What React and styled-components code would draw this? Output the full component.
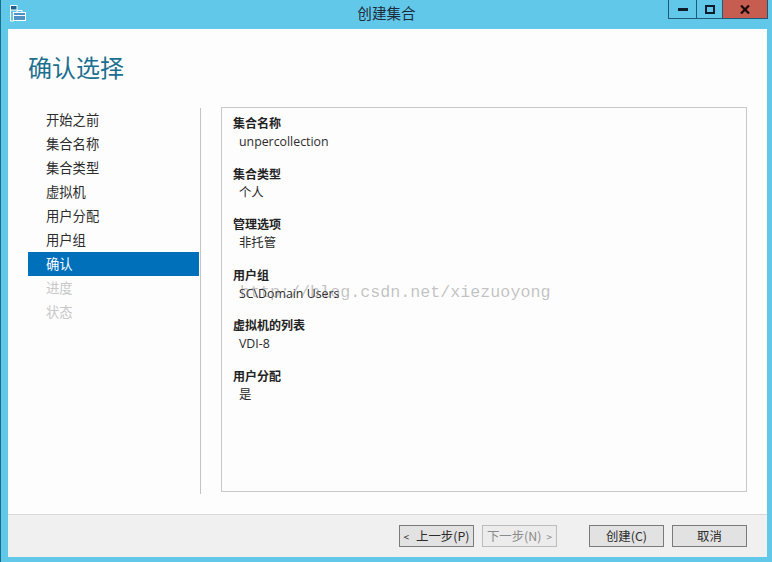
import styled, { createGlobalStyle } from "styled-components";

const steps = [
    { name: "开始之前" },
    { name: "集合名称" },
    { name: "集合类型" },
    { name: "虚拟机" },
    { name: "用户分配" },
    { name: "用户组" },
    { name: "确认", active: true },
    { name: "进度", disabled: true },
    { name: "状态", disabled: true },
];

const fields = [
    { label: "集合名称", value: "unpercollection" },
    { label: "集合类型", value: "个人" },
    { label: "管理选项", value: "非托管" },
    { label: "用户组", value: "SC\\Domain Users" },
    { label: "虚拟机的列表", value: "VDI-8" },
    { label: "用户分配", value: "是" },
];

const App = () => {
    return (
        <>
            <GlobalStyle />
            <Window>
                <TitleBar>
                    <AppIcon width="17" height="17" viewBox="0 0 17 17">
                        <path d="M0.5 0.5h6.5v4.5h-6.5z" fill="#1f5f8f" stroke="#fff" strokeWidth="1" />
                        <path d="M0.5 5v11h3" fill="none" stroke="#fff" strokeWidth="1" />
                        <rect x="3.5" y="7.5" width="12" height="8" fill="#4f93c4" stroke="#fff" strokeWidth="1" />
                        <path d="M7 7.5v-2h5v2M3.5 10.5h12" fill="none" stroke="#fff" strokeWidth="1" />
                    </AppIcon>
                    <WindowTitle>创建集合</WindowTitle>
                    <Controls>
                        <ControlButton $width={28}>
                            <svg width="10" height="3" viewBox="0 0 10 3">
                                <rect width="10" height="3" fill="#0c1c2c" />
                            </svg>
                        </ControlButton>
                        <ControlButton $width={26}>
                            <svg width="10" height="9" viewBox="0 0 10 9">
                                <rect x="1" y="1" width="8" height="7" fill="none" stroke="#0c1c2c" strokeWidth="2" />
                            </svg>
                        </ControlButton>
                        <CloseButton>
                            <svg width="10" height="9" viewBox="0 0 10 9">
                                <path d="M1 0.5l8 8M9 0.5l-8 8" fill="none" stroke="#1a0c0a" strokeWidth="2.2" />
                            </svg>
                        </CloseButton>
                    </Controls>
                </TitleBar>
                <Client>
                    <PageTitle>确认选择</PageTitle>
                    <Main>
                        <Sidebar>
                            {steps.map((step) => (
                                <Step key={step.name} $active={step.active} $disabled={step.disabled}>
                                    {step.name}
                                </Step>
                            ))}
                        </Sidebar>
                        <Panel>
                            {fields.map((field) => (
                                <Field key={field.label}>
                                    <Label>{field.label}</Label>
                                    <Value>{field.value}</Value>
                                </Field>
                            ))}
                        </Panel>
                    </Main>
                    <Footer>
                        <ButtonGroup>
                            <Button>
                                <Chevron $side="left">&lt;</Chevron>上一步(P)
                            </Button>
                            <Button $disabled>
                                下一步(N)<Chevron $side="right">&gt;</Chevron>
                            </Button>
                        </ButtonGroup>
                        <ButtonGroup>
                            <Button>创建(C)</Button>
                            <Button>取消</Button>
                        </ButtonGroup>
                    </Footer>
                </Client>
                <Watermark>http://blog.csdn.net/xiezuoyong</Watermark>
            </Window>
        </>
    );
};

export default App;

const GlobalStyle = createGlobalStyle`
    html, body {
        margin: 0;
        padding: 0;
        background: #62c8ea;
    }
`;

const Window = styled.div`
    position: relative;
    width: 772px;
    height: 562px;
    box-sizing: border-box;
    overflow: hidden;
    display: flex;
    flex-direction: column;
    padding: 0 5px 5px 7px;
    background: #62c8ea;
    border-left: 1px solid #1a6f8c;
    font-family: "Noto Sans CJK SC", "Liberation Sans", sans-serif;
`;

const TitleBar = styled.div`
    position: relative;
    height: 29px;
    flex: none;
    display: flex;
    align-items: center;
    justify-content: center;
`;

const AppIcon = styled.svg`
    position: absolute;
    left: 2px;
    top: 5px;
`;

const WindowTitle = styled.div`
    font-size: 14.6px;
    line-height: 20px;
    color: #1c2c38;
    margin: -3px 0 0 -2px;
`;

const Controls = styled.div`
    position: absolute;
    top: 0;
    right: -1px;
    height: 19px;
    display: flex;
    border: 1px solid #1d5a78;
    border-top: none;
    box-sizing: border-box;
`;

const ControlButton = styled.div`
    width: ${(props) => props.$width}px;
    box-sizing: border-box;
    display: flex;
    align-items: center;
    justify-content: center;
    border-right: 1px solid #1d5a78;
`;

const CloseButton = styled.div`
    width: 44px;
    background: #c75c50;
    display: flex;
    align-items: center;
    justify-content: center;
`;

const Client = styled.div`
    flex: 1;
    min-height: 0;
    display: flex;
    flex-direction: column;
    background: #fdfdfd;
`;

const PageTitle = styled.div`
    height: 78px;
    flex: none;
    box-sizing: border-box;
    padding: 18px 0 0 20px;
    font-size: 24px;
    line-height: 40px;
    color: #1b6f8f;
`;

const Main = styled.div`
    flex: 1;
    min-height: 0;
    display: flex;
    padding-left: 20px;
`;

const Sidebar = styled.div`
    width: 172px;
    height: 386px;
    margin-top: 1px;
    border-right: 1px solid #c4c4c4;
`;

const Step = styled.div`
    height: 24px;
    width: 171px;
    box-sizing: border-box;
    padding-left: 18px;
    font-size: 13.3px;
    line-height: 24px;
    background: ${(props) => (props.$active ? "#0070bb" : "transparent")};
    color: ${(props) => {
        if (props.$active) return "#ffffff";
        if (props.$disabled) return "#c8c8c8";
        return "#2b2b2b";
    }};
`;

const Panel = styled.div`
    width: 526px;
    height: 385px;
    box-sizing: border-box;
    margin-left: 20px;
    padding: 7px 11px;
    border: 1px solid #c8c8c8;
`;

const Field = styled.div`
    height: 50.6px;
`;

const Label = styled.div`
    font-size: 12px;
    font-weight: 700;
    line-height: 16px;
    color: #222;
`;

const Value = styled.div`
    margin-top: 2px;
    padding-left: 6px;
    font-family: "Open Sans", "Noto Sans CJK SC", sans-serif;
    font-size: 12.35px;
    line-height: 18px;
    color: #2b2b2b;
`;

const Footer = styled.div`
    height: 43px;
    flex: none;
    box-sizing: border-box;
    display: flex;
    justify-content: flex-end;
    gap: 32px;
    padding: 10px 20px 0 0;
    background: #f0f0f0;
    border-top: 1px solid #d8d8d8;
`;

const ButtonGroup = styled.div`
    display: flex;
    gap: 8px;
`;

const Button = styled.div`
    width: 75px;
    height: 22px;
    box-sizing: border-box;
    display: flex;
    align-items: center;
    justify-content: center;
    font-size: 12.4px;
    white-space: nowrap;
    background: ${(props) => (props.$disabled ? "#ececec" : "#e2e2e2")};
    border: 1px solid ${(props) => (props.$disabled ? "#bcbcbc" : "#7a7a7a")};
    color: ${(props) => (props.$disabled ? "#8a8a8a" : "#2b2b2b")};
`;

const Chevron = styled.span`
    font-size: 10px;
    margin: ${(props) => (props.$side === "left" ? "0 7px 0 0" : "0 0 0 5px")};
`;

const Watermark = styled.div`
    position: absolute;
    left: 239px;
    top: 283px;
    font-family: "Liberation Mono", monospace;
    font-size: 16.7px;
    line-height: 20px;
    color: rgba(110, 110, 110, 0.42);
    white-space: nowrap;
`;
